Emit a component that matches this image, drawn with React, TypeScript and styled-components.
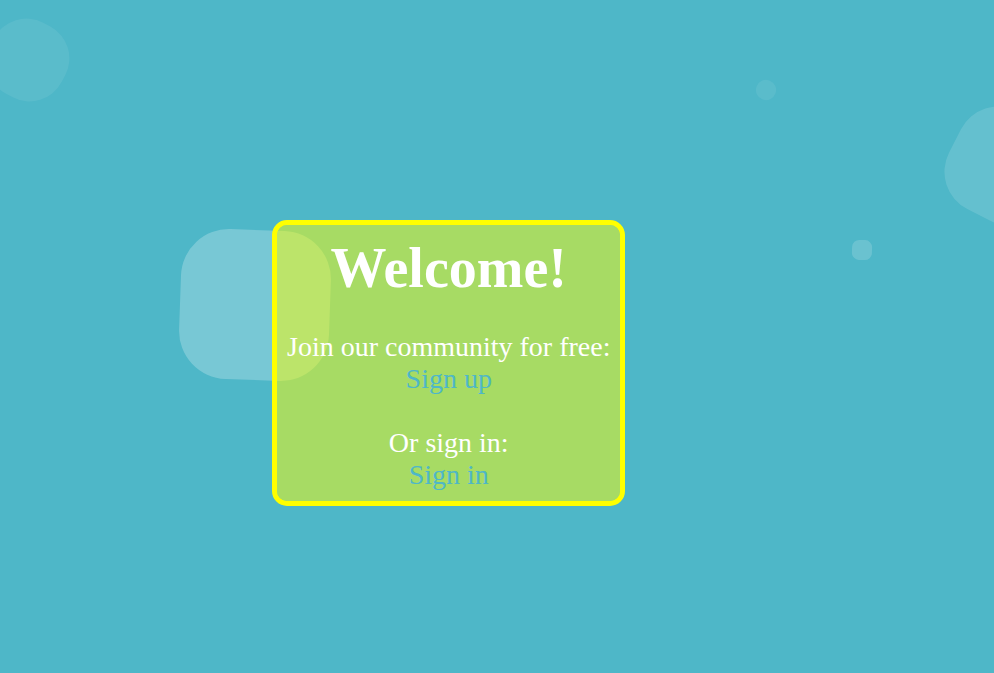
import React from 'react';
import styled, { createGlobalStyle } from 'styled-components';

const GlobalStyle = createGlobalStyle`
  body {
    margin: 0;
    background: #4eb7c8;
    font-family: "Liberation Serif", "Times New Roman", serif;
  }
`;

const Page = styled.main`
  position: relative;
  box-sizing: border-box;
  min-height: 100vh;
  padding: 220px 0 40px 272px;
  overflow: hidden;
`;

interface BubbleProps {
  $x: number;
  $y: number;
  $size: number;
  $turn: number;
  $radius: number;
  $alpha: number;
}

const Bubble = styled.li<BubbleProps>`
  position: absolute;
  left: ${(p) => p.$x}px;
  top: ${(p) => p.$y}px;
  width: ${(p) => p.$size}px;
  height: ${(p) => p.$size}px;
  border-radius: ${(p) => p.$radius}%;
  background: rgba(255, 255, 255, ${(p) => p.$alpha});
  transform: rotate(${(p) => p.$turn}deg);
`;

const Bubbles = styled.ul`
  position: absolute;
  inset: 0;
  margin: 0;
  padding: 0;
  list-style: none;
  overflow: hidden;
`;

const Card = styled.section`
  position: relative;
  box-sizing: border-box;
  width: fit-content;
  padding: 10px;
  border: 5px solid #ffff00;
  border-radius: 15px;
  background: rgba(255, 255, 0, 0.5);
  background-clip: padding-box;
  color: #ffffff;
  font-size: 28px;
  line-height: 32px;
  text-align: center;
`;

const Title = styled.h1`
  margin: 0 0 30px;
  font-size: 56px;
  line-height: 66px;
`;

const Line = styled.p`
  margin: 0;
`;

const Action = styled.a`
  display: block;
  color: #4eb7c8;
  text-decoration: none;

  &:not(:last-child) {
    margin-bottom: 32px;
  }
`;

const bubbles: BubbleProps[] = [
  { $x: -12, $y: 20, $size: 80, $turn: 28, $radius: 45, $alpha: 0.07 },
  { $x: 180, $y: 230, $size: 150, $turn: 2, $radius: 32, $alpha: 0.24 },
  { $x: 756, $y: 80, $size: 20, $turn: 20, $radius: 48, $alpha: 0.07 },
  { $x: 852, $y: 240, $size: 20, $turn: 2, $radius: 36, $alpha: 0.16 },
  { $x: 949, $y: 111, $size: 110, $turn: 27, $radius: 38, $alpha: 0.13 },
];

export default function App() {
  return (
    <Page>
      <GlobalStyle />
      <Bubbles aria-hidden="true">
        {bubbles.map((bubble) => (
          <Bubble key={bubble.$x} {...bubble} />
        ))}
      </Bubbles>
      <Card>
        <Title>Welcome!</Title>
        <Line>Join our community for free:</Line>
        <Action href="#signup">Sign up</Action>
        <Line>Or sign in:</Line>
        <Action href="#signin">Sign in</Action>
      </Card>
    </Page>
  );
}
